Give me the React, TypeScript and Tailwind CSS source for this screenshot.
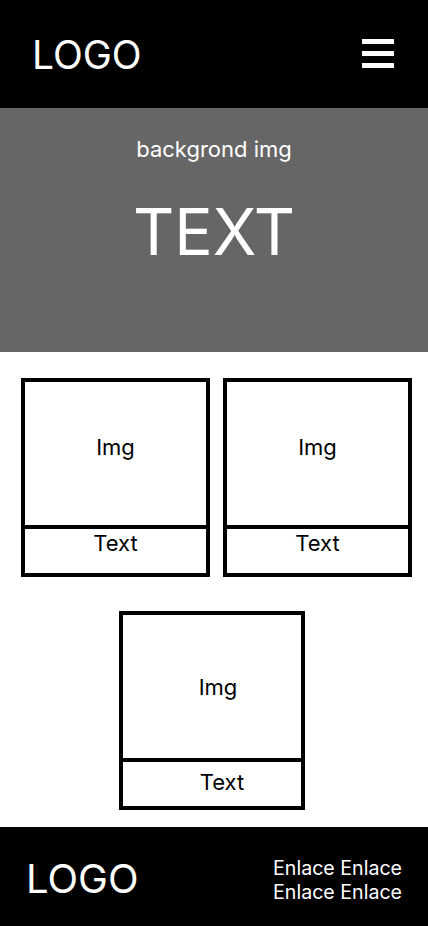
import { ReactNode } from "react";

type CardProps = {
  className?: string;
  imgPad?: string;
  textPad?: string;
};

function Card({ className = "", imgPad = "pt-[51px]", textPad = "" }: CardProps) {
  return (
    <div className={`flex flex-col border-4 border-black ${className}`}>
      <div className={`h-[143px] text-center text-[22px] leading-[28px] ${imgPad}`}>
        Img
      </div>
      <div className={`h-[48px] border-t-4 border-black text-center text-[22px] leading-[28px] ${textPad}`}>
        Text
      </div>
    </div>
  );
}

function Shell({ children }: { children: ReactNode }) {
  return (
    <div className="min-h-[926px] w-full bg-white text-black" style={{ fontFamily: "Inter, 'Noto Sans', sans-serif" }}>
      {children}
    </div>
  );
}

export default function App() {
  return (
    <Shell>
      {/* header */}
      <header className="flex h-[108px] items-center justify-between bg-black pl-8 pr-[34px] text-white">
        <span className="text-[39px] leading-none">LOGO</span>
        <div className="flex w-8 flex-col gap-[7px] pb-[2px]">
          <span className="h-[5px] bg-white" />
          <span className="h-[5px] bg-white" />
          <span className="h-[5px] bg-white" />
        </div>
      </header>

      {/* hero */}
      <section className="flex h-[244px] flex-col items-center bg-[#666666] pt-[27px] text-white">
        <p className="text-[22px] leading-[28px]">backgrond img</p>
        <h1 className="mt-[37px] text-[64px] leading-none">TEXT</h1>
      </section>

      {/* cards */}
      <main className="pb-[17px] pt-[26px]">
        <div className="grid grid-cols-2 gap-[13px] pl-[21px] pr-4">
          <Card />
          <Card />
        </div>
        <div className="mt-[34px] flex pl-[119px]">
          <Card className="w-[186px]" imgPad="pl-[12px] pt-[58px]" textPad="pl-[20px] pt-[6px]" />
        </div>
      </main>

      {/* footer */}
      <footer className="flex h-[99px] items-center justify-between bg-black pl-[26px] pr-[26px] text-white">
        <span className="pt-[4px] text-[40px] leading-none">LOGO</span>
        <div className="pt-[6px] text-right text-[19.6px] leading-[24px]">
          <p>Enlace Enlace</p>
          <p>Enlace Enlace</p>
        </div>
      </footer>
    </Shell>
  );
}
